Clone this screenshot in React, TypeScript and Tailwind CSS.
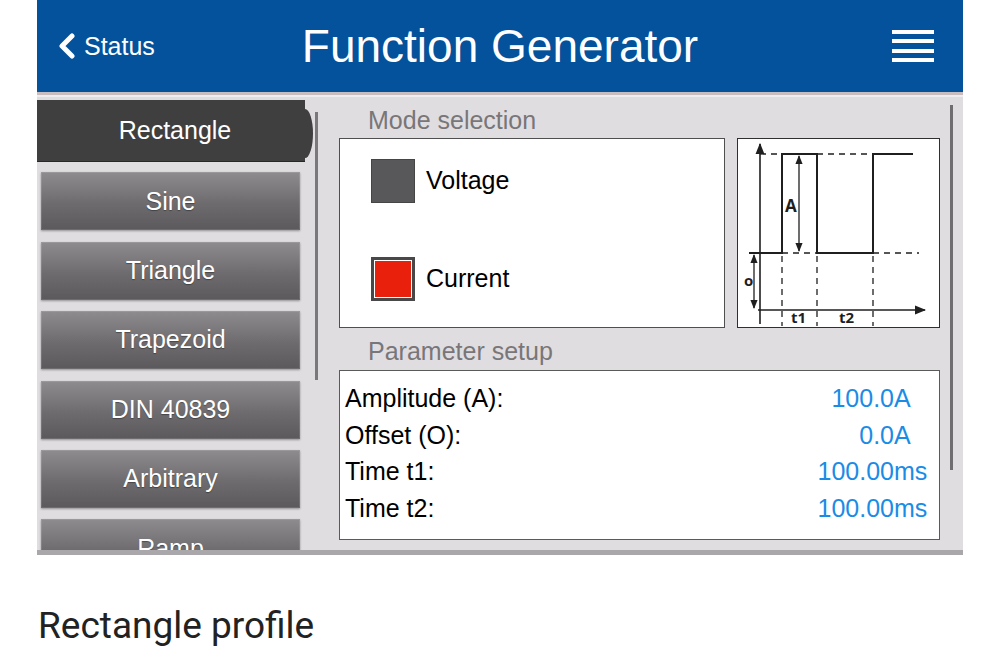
import React from "react";

const menuItems = ["Sine", "Triangle", "Trapezoid", "DIN 40839", "Arbitrary", "Ramp"];

const params = [
  { label: "Amplitude (A):", value: "100.0", unit: "A" },
  { label: "Offset (O):", value: "0.0", unit: "A" },
  { label: "Time t1:", value: "100.00", unit: "ms" },
  { label: "Time t2:", value: "100.00", unit: "ms" },
];

function Diagram() {
  // local coords of the 203x190 diagram box
  const ink = "#1f1f1f";
  const label = "'Open Sans', 'Liberation Sans', sans-serif";
  return (
    <svg width="203" height="190" viewBox="0 0 203 190" className="block shrink-0">
      <rect x="0.5" y="0.5" width="202" height="189" fill="#fff" stroke="#2f2f2f" strokeWidth="1" />
      <defs>
        <marker id="ah" viewBox="0 0 10 10" refX="9" refY="5" markerWidth="7" markerHeight="7" orient="auto-start-reverse">
          <path d="M0 1 L10 5 L0 9 z" fill={ink} />
        </marker>
      </defs>
      {/* axes */}
      <line x1="23" y1="186" x2="23" y2="6" stroke={ink} strokeWidth="1.6" markerEnd="url(#ah)" />
      <line x1="21" y1="172" x2="188" y2="172" stroke={ink} strokeWidth="1.6" markerEnd="url(#ah)" />
      {/* dashed guides */}
      <g stroke={ink} strokeWidth="1.3" strokeDasharray="6 5" fill="none">
        <line x1="23" y1="16" x2="45" y2="16" />
        <line x1="80" y1="16" x2="136" y2="16" />
        <line x1="45" y1="115" x2="80" y2="115" />
        <line x1="136" y1="115" x2="182" y2="115" />
        <line x1="45" y1="118" x2="45" y2="188" />
        <line x1="80" y1="118" x2="80" y2="188" />
        <line x1="136" y1="118" x2="136" y2="188" />
      </g>
      {/* signal */}
      <polyline
        points="12,115 45,115 45,16 80,16 80,115 136,115 136,16 176,16"
        fill="none"
        stroke={ink}
        strokeWidth="2"
      />
      {/* A and O arrows */}
      <line x1="62" y1="18" x2="62" y2="113" stroke={ink} strokeWidth="1.3" markerStart="url(#ah)" markerEnd="url(#ah)" />
      <line x1="17" y1="117" x2="17" y2="170" stroke={ink} strokeWidth="1.3" markerStart="url(#ah)" markerEnd="url(#ah)" />
      <text x="48" y="74" fontFamily={label} fontWeight="700" fontSize="17" fill={ink}>
        A
      </text>
      <text x="7" y="148" fontFamily={label} fontWeight="700" fontSize="15" fill={ink}>
        o
      </text>
      <text x="54" y="185" fontFamily={label} fontWeight="700" fontSize="15" fill={ink}>
        t1
      </text>
      <text x="102" y="185" fontFamily={label} fontWeight="700" fontSize="15" fill={ink}>
        t2
      </text>
    </svg>
  );
}

export default function App() {
  return (
    <div className="min-h-[667px] bg-white">
      <div className="ml-[37px] w-[926px] font-['Liberation_Sans',Arial,sans-serif]">
        {/* header */}
        <div className="grid h-[92px] grid-cols-[1fr_auto_1fr] items-center bg-[#03529b] text-white">
          <div className="flex items-center pl-[20px]">
            <svg width="19" height="26" viewBox="0 0 19 26" className="mr-[8px]">
              <path d="M15 3 L5 13 L15 23" fill="none" stroke="#fff" strokeWidth="5" strokeLinecap="round" strokeLinejoin="round" />
            </svg>
            <span className="text-[25px] leading-none">Status</span>
          </div>
          <div className="text-[46px] leading-none">Function Generator</div>
          <div className="flex justify-end pr-[29px]">
            <div className="flex w-[42px] flex-col gap-[5.5px]">
              <div className="h-[4px] bg-white" />
              <div className="h-[4px] bg-white" />
              <div className="h-[4px] bg-white" />
              <div className="h-[4px] bg-white" />
            </div>
          </div>
        </div>
        <div className="h-[3px] bg-[#c9bdbf]" />
        <div className="h-[2px] bg-[#efedef]" />

        {/* body */}
        <div className="flex h-[453px] overflow-hidden bg-[#e0dde0]">
          {/* menu */}
          <div className="flex w-[276px] shrink-0 flex-col gap-[11.4px] pt-[3px]">
            <div className="relative mb-[-1px] flex h-[62px] w-[268px] shrink-0 items-center justify-center bg-[#403f40] text-[25px] text-white shadow-[inset_0_-1px_0_#2a2626]">
              <span className="pl-[8px]">Rectangle</span>
              <div className="absolute right-[-8px] top-[9px] h-[49px] w-[8px] rounded-tr-[8px_24.5px] rounded-br-[8px_24.5px] bg-[#403f40]" />
            </div>
            {menuItems.map((item) => (
              <div
                key={item}
                className="ml-[4px] flex h-[58px] w-[259px] shrink-0 items-center justify-center bg-[linear-gradient(#8e8c8e,#6d6b6d_55%,#5b595b)] text-[25px] text-white shadow-[0_1px_2px_rgba(0,0,0,0.35),inset_0_0_0_1px_rgba(255,255,255,0.12)] [text-shadow:0_1px_1px_rgba(0,0,0,0.35)]"
              >
                {item}
              </div>
            ))}
          </div>
          {/* left scrollbar */}
          <div className="ml-[2px] mt-[15px] h-[268px] w-[3px] shrink-0 bg-[#7a787a]" />

          {/* content */}
          <div className="ml-[21px] flex w-[601px] shrink-0 flex-col pt-[6px]">
            <div className="h-[35px] pl-[29px] text-[25px] leading-[35px] text-[#787678]">Mode selection</div>
            <div className="flex h-[190px] gap-[12px]">
              <div className="flex w-[386px] flex-col gap-[54px] border border-[#4f4f4f] bg-white pl-[31px] pt-[20px]">
                <div className="flex h-[44px] items-center gap-[11px]">
                  <div className="h-[44px] w-[44px] border border-[#454545] bg-[#58585a]" />
                  <span className="text-[25px] text-black">Voltage</span>
                </div>
                <div className="flex h-[44px] items-center gap-[11px]">
                  <div className="h-[44px] w-[44px] border-[3px] border-[#484848] bg-white p-px">
                    <div className="h-full w-full bg-[#e8200c]" />
                  </div>
                  <span className="text-[25px] text-black">Current</span>
                </div>
              </div>
              <Diagram />
            </div>
            <div className="h-[42px] pl-[29px] pt-[4px] text-[25px] leading-[38px] text-[#787678]">Parameter setup</div>
            <div className="flex h-[170px] flex-col border border-[#5a5a5a] bg-white pl-[5px] pr-[12px] pt-[10px]">
              {params.map((p) => (
                <div key={p.label} className="flex h-[36.4px] items-center text-[25px]">
                  <span className="flex-1 text-black">{p.label}</span>
                  <span className="text-right text-[#1a8ce6]">{p.value}</span>
                  <span className="w-[33px] text-[#1a8ce6]">{p.unit}</span>
                </div>
              ))}
            </div>
          </div>
          {/* right scrollbar */}
          <div className="ml-[10px] mt-[8px] h-[365px] w-[3px] shrink-0 bg-[#6f6d6f]" />
        </div>
        <div className="h-[5px] bg-[#a9a7a9]" />
      </div>

      <div className="ml-[38px] mt-[53px] font-['Roboto',sans-serif] text-[37px] leading-[36px] text-[#222]">
        Rectangle profile
      </div>
    </div>
  );
}
